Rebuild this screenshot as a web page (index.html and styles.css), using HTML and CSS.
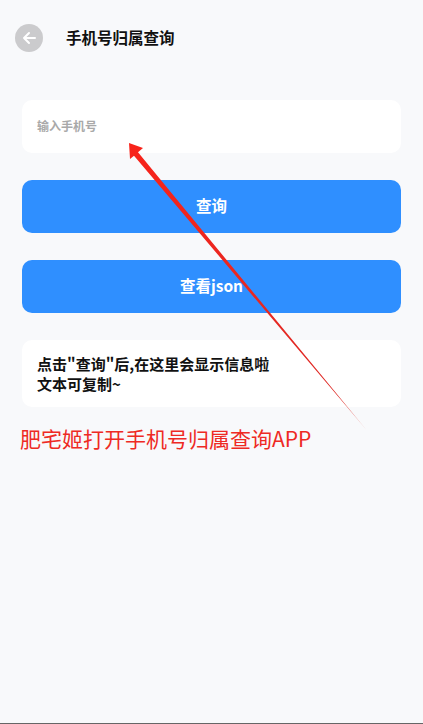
FILE: index.html
```html
<!DOCTYPE html>
<html lang="zh-CN">
<head>
<meta charset="utf-8">
<title>手机号归属查询</title>
<link rel="stylesheet" href="styles.css">
</head>
<body>
<div class="page">
  <header class="header">
    <div class="back">
      <svg class="back-icon" viewBox="0 0 16 16" width="16" height="16"><path d="M14 8H3M8 3L3 8l5 5" fill="none" stroke="#fff" stroke-width="2" stroke-linecap="round" stroke-linejoin="round"/></svg>
    </div>
    <h1 class="title">手机号归属查询</h1>
  </header>
  <main class="content">
    <div class="field">输入手机号</div>
    <button class="btn">查询</button>
    <button class="btn">查看json</button>
    <div class="result">点击"查询"后,在这里会显示信息啦<br>文本可复制~</div>
    <p class="note">肥宅姬打开手机号归属查询APP</p>
  </main>
  <svg class="arrow" viewBox="0 0 423 724" width="423" height="724">
    <defs>
      <linearGradient id="fade" gradientUnits="userSpaceOnUse" x1="129" y1="143" x2="366" y2="430">
        <stop offset="0" stop-color="#f8231a"/>
        <stop offset="0.88" stop-color="#dd2a26"/>
        <stop offset="1" stop-color="#f0a8a0"/>
      </linearGradient>
    </defs>
    <path d="M129 143L143 148L138 152.300L366.500 430L134 155.700L130 159Z" fill="url(#fade)"/>
  </svg>
</div>
</body>
</html>
```
FILE: styles.css
```css
* { box-sizing: border-box; }
html, body { margin: 0; padding: 0; }
body {
  background: #f8f9fb;
  font-family: "Noto Sans CJK SC", "Noto Sans", sans-serif;
}
.page {
  position: relative;
  width: 423px;
  height: 724px;
  overflow: hidden;
  border-bottom: 1px solid #666;
}
.header {
  display: flex;
  align-items: center;
  gap: 23px;
  padding: 24px 0 0 15px;
  height: 52px;
}
.back {
  display: flex;
  align-items: center;
  justify-content: center;
  width: 28px;
  height: 28px;
  border-radius: 50%;
  background: #cbcbcd;
}
.title {
  margin: 0 0 2px;
  font-size: 15.500px;
  line-height: 28px;
  font-weight: 700;
  color: #111;
}
.content {
  display: flex;
  flex-direction: column;
  padding: 48px 22px 0;
}
.field {
  height: 53px;
  padding-left: 15px;
  background: #fff;
  border-radius: 10px;
  font-size: 12px;
  line-height: 51px;
  font-weight: 700;
  color: #a9a9a9;
}
.btn {
  height: 53px;
  margin-top: 27px;
  padding: 0 0 4px;
  border: 0;
  border-radius: 10px;
  background: #2f8fff;
  color: #fff;
  font-family: inherit;
  font-size: 15.500px;
  font-weight: 700;
}
.result {
  margin-top: 27px;
  height: 67px;
  padding: 14px 15px 0;
  background: #fff;
  border-radius: 10px;
  font-size: 15px;
  line-height: 20px;
  font-weight: 700;
  color: #111;
}
.note {
  margin: 16px 0 0 -2px;
  font-size: 21px;
  line-height: 30px;
  color: #ee2a24;
}
.arrow {
  position: absolute;
  left: 0;
  top: 0;
}
```
